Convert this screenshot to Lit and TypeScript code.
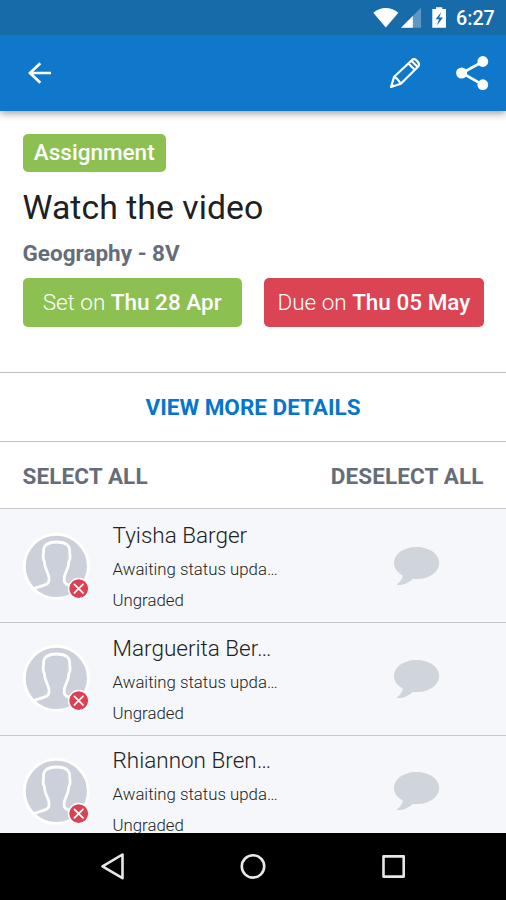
import { LitElement, html, css } from "lit";
import { customElement, property } from "lit/decorators.js";

@customElement("student-row")
class StudentRow extends LitElement {
  @property() name = "";

  static styles = css`
    :host { display: flex; box-sizing: border-box; height: 112.5px; flex: none; border-bottom: 1.4px solid #c5c7ca; color: #222; background: #f5f7fb; }
    .avatar { width: 68px; height: 68px; margin: 21.2px 0 0 22px; flex: none; }
    .info { width: 180px; margin-left: 22.5px; padding-top: 8.5px; font-weight: 300; white-space: nowrap; }
    .name { font-size: 22.5px; line-height: 32px; }
    .line { font-size: 16.8px; line-height: 31px; }
    .status { margin-top: 3.2px; }
    .bubble { width: 48px; height: 42px; margin: 34.5px 0 0 100px; flex: none; }
  `;

  render() {
    return html`
      <svg class="avatar" viewBox="0 0 68 68">
        <circle cx="34.3" cy="34.3" r="32" fill="#cbd0da" stroke="#fff" stroke-width="2.8" />
        <path d="M11.8 56.6L23.6 52.6Q26.6 51.6 27 48.6Q27.4 45.5 26.2 42.5L23.4 35.5Q22.6 33 22.4 29.5Q21 28 21.1 24.5Q21.8 20.5 21.6 17Q23 10.1 34.6 10Q46.2 10.1 47.6 17Q47.4 20.5 48.1 24.5Q48.2 28 46.8 29.5Q46.6 33 45.8 35.5L43 42.5Q41.8 45.5 42.2 48.6Q42.6 51.6 45.6 52.6L56 56.5"
          fill="none" stroke="#fff" stroke-width="2.8" stroke-linejoin="round" />
        <circle cx="56.7" cy="56.6" r="10.1" fill="#db4154" stroke="#fff" stroke-width="1.3" />
        <path d="M52.4 52.3l8.6 8.6M61 52.3l-8.6 8.6" stroke="#fff" stroke-width="1.7" stroke-linecap="round" />
      </svg>
      <div class="info">
        <div class="name">${this.name}</div>
        <div class="line status">Awaiting status upda…</div>
        <div class="line">Ungraded</div>
      </div>
      <svg class="bubble" viewBox="0 0 48 42">
        <path d="M23.6 2C36.2 2 46.2 9 46.2 17.9S36.2 34 23.6 34Q21.8 34 20 33.7C15.5 37.7 11 40 4.3 40.2Q3.7 39.7 4.4 39C7.8 36 9.5 33.5 9.8 30.4C4.2 27.4 1 23 1 17.9C1 9 11 2 23.6 2Z" fill="#d0d4db" />
      </svg>
    `;
  }
}

@customElement("app-root")
class AppRoot extends LitElement {
  static styles = css`
    :host { display: flex; flex-direction: column; width: 506px; height: 900px; overflow: hidden; background: #fff; font-family: Roboto, "Liberation Sans", sans-serif; }
    svg { display: block; flex: none; }
    .statusbar { height: 35px; flex: none; background: #176ba9; display: flex; color: #fff; position: relative; z-index: 2; }
    .sysicons { width: 84px; height: 35px; margin-left: 370px; }
    .time { margin-left: 2px; font-size: 19.7px; font-weight: 500; line-height: 38px; }
    .appbar { height: 76px; flex: none; background: #0f78cb; display: flex; position: relative; z-index: 1; box-shadow: 0 2px 8px rgba(0,0,0,.42); }
    .back { width: 60px; height: 76px; }
    .actions { width: 126px; height: 76px; margin-left: 320px; }
    .summary { height: 262px; flex: none; box-sizing: border-box; padding: 23px 22.5px 0; border-bottom: 1.4px solid #c0c0c0; }
    .tag { display: inline-block; vertical-align: top; box-sizing: border-box; width: 143.5px; height: 37.5px; line-height: 36.5px; text-align: center; color: #fff; background: #8cc152; border-radius: 5px; font-size: 22.5px; font-weight: 500; }
    .title { margin-top: 14.5px; font-size: 33.75px; line-height: 44px; color: #202020; font-weight: 400; letter-spacing: .05px; }
    .subject { font-size: 22.5px; line-height: 28px; margin-top: 9px; font-weight: 700; color: #656d78; }
    .dates { display: flex; gap: 22.5px; margin-top: 10.6px; }
    .date { flex: 1; height: 49px; line-height: 49px; border-radius: 5px; color: #fff; text-align: center; font-size: 22.5px; font-weight: 300; white-space: nowrap; background: #8cc152; }
    .date b { font-weight: 500; }
    .due { background: #da4453; }
    .more { height: 69px; flex: none; box-sizing: border-box; border-bottom: 1.4px solid #c0c0c0; text-align: center; line-height: 68.5px; color: #0676cc; font-size: 22.5px; font-weight: 700; }
    .select { height: 67px; flex: none; box-sizing: border-box; border-bottom: 1.4px solid #c5c7ca; padding: 0 22.5px; display: flex; justify-content: space-between; line-height: 69px; color: #656d78; font-size: 22.5px; font-weight: 700; letter-spacing: .1px; }
    .list { height: 324px; flex: none; box-sizing: border-box; padding-top: 1.5px; overflow: hidden; display: flex; flex-direction: column; background: #f5f7fb; }
    .nav { flex: 1; background: #000; }
  `;

  render() {
    return html`
      <div class="statusbar">
        <svg class="sysicons" viewBox="370 0 84 35">
          <path d="M373.3 12.7C380.5 6.3 391.2 6.3 398.4 12.7L385.8 27.5Z" fill="#fff" />
          <path d="M421 7.7V27.7H401Z" fill="#fff" opacity=".3" />
          <path d="M412.8 15.9V27.7H401Z" fill="#fff" />
          <path d="M432.3 9H436V7.3H442.3V9H446V27.7H432.3Z" fill="#fff" />
          <path d="M441.3 12L435.6 19.3H439L436.8 25.5L443 17.6H439.2Z" fill="#176ba9" />
        </svg>
        <div class="time">6:27</div>
      </div>
      <div class="appbar">
        <svg class="back" viewBox="0 35 60 76">
          <path d="M40.3 63.2L30 73L40.3 82.8M30 73H51" fill="none" stroke="#fff" stroke-width="2.7" />
        </svg>
        <svg class="actions" viewBox="380 35 126 76" fill="none" stroke="#fff">
          <g stroke-width="2.2" stroke-linejoin="round">
            <path d="M391 87L394.2 76.7L411.8 60.2Q413.9 58.2 416.3 60.2L418 62Q420 64.4 418 66.8L400.8 83.7Z" />
            <path d="M394.5 76.8L397.2 78.9L400.6 83.4M408.4 63.5L414.7 69.8M411.4 60.8L417.6 67" />
          </g>
          <path d="M391 87.2l1.1-3.9 2.8 2.8z" fill="#fff" stroke="none" />
          <path d="M483 61.5L462 73L483 84.8" stroke-width="2.6" />
          <g fill="#fff" stroke="none"><circle cx="482.8" cy="61.5" r="5.4" /><circle cx="461.6" cy="73" r="5.5" /><circle cx="482.8" cy="84.7" r="5.4" /></g>
        </svg>
      </div>
      <div class="summary">
        <div><span class="tag">Assignment</span></div>
        <div class="title">Watch the video</div>
        <div class="subject">Geography - 8V</div>
        <div class="dates">
          <div class="date">Set on <b>Thu 28 Apr</b></div>
          <div class="date due">Due on <b>Thu 05 May</b></div>
        </div>
      </div>
      <div class="more">VIEW MORE DETAILS</div>
      <div class="select"><span>SELECT ALL</span><span>DESELECT ALL</span></div>
      <div class="list">
        ${["Tyisha Barger", "Marguerita Ber…", "Rhiannon Bren…"].map((n) => html`<student-row .name=${n}></student-row>`)}
      </div>
      <svg class="nav" viewBox="0 833 506 67" fill="none" stroke="#e8e8e8" stroke-width="2.6" stroke-linejoin="round">
        <path d="M102.5 866.4L122.5 854.5V878.2Z" />
        <circle cx="253" cy="866.4" r="11.2" />
        <rect x="383.5" y="856.4" width="20.2" height="20.2" />
      </svg>
    `;
  }
}
